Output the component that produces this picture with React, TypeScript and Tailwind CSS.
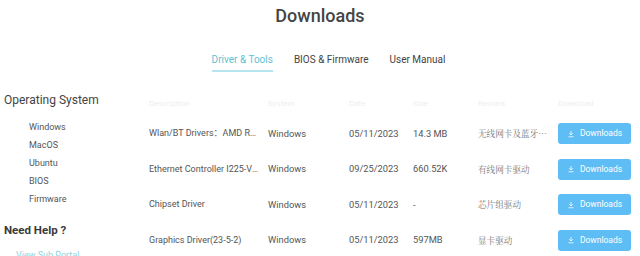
import { useState } from 'react'

interface Row {
  desc: string
  system: string
  date: string
  size: string
  remark: string
}

const rows: Row[] = [
  { desc: 'Wlan/BT Drivers：AMD RZ616 Wi-Fi 6E', system: 'Windows', date: '05/11/2023', size: '14.3 MB', remark: '无线网卡及蓝牙驱动程序' },
  { desc: 'Ethernet Controller I225-V Driver', system: 'Windows', date: '09/25/2023', size: '660.52K', remark: '有线网卡驱动' },
  { desc: 'Chipset Driver', system: 'Windows', date: '05/11/2023', size: '-', remark: '芯片组驱动' },
  { desc: 'Graphics Driver(23-5-2)', system: 'Windows', date: '05/11/2023', size: '597MB', remark: '显卡驱动' },
]

const systems = ['Windows', 'MacOS', 'Ubuntu', 'BIOS', 'Firmware']
const tabs = ['Driver & Tools', 'BIOS & Firmware', 'User Manual']

function DownloadIcon() {
  return (
    <svg width="8" height="8" viewBox="0 0 16 16" fill="none" stroke="currentColor" strokeWidth="1.6">
      <path d="M8 2v8M4.5 6.5 8 10l3.5-3.5M3 13.5h10" />
    </svg>
  )
}

function App() {
  const [tab, setTab] = useState(0)

  return (
    <div className="w-[640px] h-[256px] overflow-hidden bg-white text-[#555] font-['Roboto','Noto_Sans_CJK_SC',sans-serif]">
      <h1 className="pt-[5px] text-center text-[18px] leading-[22px] font-medium text-[#444]">Downloads</h1>

      <div className="mt-[26px] flex justify-center gap-[21px] pl-[17px] text-[10px]">
        {tabs.map((t, i) => (
          <button
            key={t}
            onClick={() => setTab(i)}
            className={
              i === tab
                ? 'pb-[3px] border-b-2 border-[#b5e6ef] text-[#62bfd3] leading-[14px]'
                : 'pb-[3px] border-b-2 border-transparent text-[#444] leading-[14px]'
            }
          >
            {t}
          </button>
        ))}
      </div>

      <div className="mt-[22px] flex">
        {/* sidebar */}
        <div className="w-[140px] shrink-0 pl-[4px] -mt-[2px]">
          <h2 className="text-[12px] leading-[16px] text-[#444]">Operating System</h2>
          <ul className="mt-[10px] pl-[25px] text-[9px] leading-[18px] text-[#555]">
            {systems.map(s => (
              <li key={s}>{s}</li>
            ))}
          </ul>
          <h2 className="mt-[14px] text-[11.5px] leading-[16px] font-bold text-[#3a3a3a]">Need Help ?</h2>
          <div className="mt-[11px] pl-[12px] text-[9px] leading-[12px] text-[#8fd4dd]">View Sub Portal</div>
        </div>

        {/* table */}
        <div className="flex-1 pl-[9px] pr-[9px]">
          <div className="flex h-[20px] items-center text-[8px] text-[#eeeeee]">
            <div className="w-[119px]">Description</div>
            <div className="w-[81px]">System</div>
            <div className="w-[64px]">Date</div>
            <div className="w-[65px]">Size</div>
            <div className="w-[80px]">Remark</div>
            <div className="flex-1">Download</div>
          </div>
          <div className="mt-[2px]">
            {rows.map(r => (
              <div key={r.desc} className="flex h-[35.5px] items-center text-[9.3px] text-[#555]">
                <div className="w-[111px] mr-[8px] truncate text-[9px]">{r.desc}</div>
                <div className="w-[81px]">{r.system}</div>
                <div className="w-[64px]">{r.date}</div>
                <div className="w-[65px]">{r.size}</div>
                <div className="w-[69px] mr-[11px] truncate text-[8.6px] text-[#777] font-['Noto_Serif_CJK_SC','Noto_Sans_CJK_SC',serif]">{r.remark}</div>
                <button className="flex h-[21px] w-[73px] items-center justify-center gap-[5px] rounded-[3px] bg-[#5ebdf5] text-[8.5px] text-white">
                  <DownloadIcon />
                  Downloads
                </button>
              </div>
            ))}
          </div>
        </div>
      </div>
    </div>
  )
}

export default App
